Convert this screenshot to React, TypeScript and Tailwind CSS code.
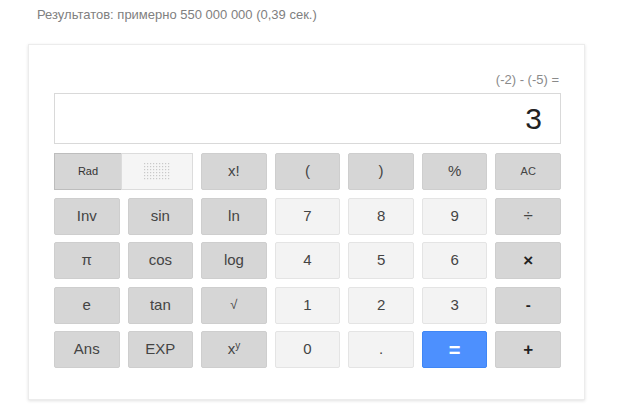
import React from "react";

type Kind = "fn" | "num" | "op" | "eq";

const Btn = ({ kind, children, className = "" }: { kind: Kind; children: React.ReactNode; className?: string }) => {
  const base = "h-[37px] flex items-center justify-center rounded-[2px] border text-[15px] select-none";
  const styles: Record<Kind, string> = {
    fn: "bg-[#d6d6d6] border-[#cecece] text-[#444]",
    num: "bg-[#f3f3f3] border-[#e4e4e4] text-[#444]",
    op: "bg-[#d6d6d6] border-[#cecece] text-[#222] font-bold",
    eq: "bg-[#4d90fe] border-[#3f86f5] text-white font-bold text-[20px]",
  };
  return <div className={`${base} ${styles[kind]} ${className}`}>{children}</div>;
};

const Dots = () => {
  const dots = [];
  for (let r = 0; r < 6; r++) {
    for (let c = 0; c < 9; c++) {
      dots.push(<rect key={`${r}-${c}`} x={c * 3} y={r * 3} width={1.2} height={1.2} fill="#c9c9c9" />);
    }
  }
  return (
    <svg width="27" height="18" viewBox="0 0 27 18">
      {dots}
    </svg>
  );
};

export default function App() {
  return (
    <div className="w-[628px] h-[405px] bg-white overflow-hidden" style={{ fontFamily: '"Liberation Sans", Arial, sans-serif' }}>
      <div className="pl-[37px] pt-[7px] text-[13px] leading-[16px] text-[#808080]">
        Результатов: примерно 550 000 000 (0,39 сек.)
      </div>
      <div className="ml-[28px] mt-[21px] w-[557px] h-[356px] border border-[#ececec] shadow-[0_1px_3px_rgba(0,0,0,0.12)] pl-[25px] pr-[23px] pt-[25px]">
        <div className="h-[23px] flex items-start justify-end pt-[2px] pr-[2px] text-[13px] leading-[15px] text-[#8a8a8a]">(-2) - (-5) =</div>
        <div className="h-[51px] border border-[#d9d9d9] flex items-center justify-end pr-[18px] text-[30px] text-[#222]">
          3
        </div>
        <div className="mt-[9px] grid grid-cols-7 gap-x-[8px] gap-y-[7.5px]">
          <div className="col-span-2 flex h-[37px]">
            <div className="w-[67px] h-full flex items-center justify-center bg-[#d6d6d6] border border-[#bdbdbd] border-r-0 text-[11px] text-[#333]">
              Rad
            </div>
            <div className="flex-1 h-full flex items-center justify-center bg-[#f5f5f5] border border-[#dcdcdc]">
              <Dots />
            </div>
          </div>
          <Btn kind="fn">x!</Btn>
          <Btn kind="fn">(</Btn>
          <Btn kind="fn">)</Btn>
          <Btn kind="fn">%</Btn>
          <Btn kind="fn" className="!text-[11px]">AC</Btn>

          <Btn kind="fn">Inv</Btn>
          <Btn kind="fn">sin</Btn>
          <Btn kind="fn">ln</Btn>
          <Btn kind="num">7</Btn>
          <Btn kind="num">8</Btn>
          <Btn kind="num">9</Btn>
          <Btn kind="op" className="!font-normal !text-[#444] !text-[17px]">÷</Btn>

          <Btn kind="fn">π</Btn>
          <Btn kind="fn">cos</Btn>
          <Btn kind="fn">log</Btn>
          <Btn kind="num">4</Btn>
          <Btn kind="num">5</Btn>
          <Btn kind="num">6</Btn>
          <Btn kind="op" className="!text-[17px]">×</Btn>

          <Btn kind="fn">e</Btn>
          <Btn kind="fn">tan</Btn>
          <Btn kind="fn" className="!text-[13px]">√</Btn>
          <Btn kind="num">1</Btn>
          <Btn kind="num">2</Btn>
          <Btn kind="num">3</Btn>
          <Btn kind="op">-</Btn>

          <Btn kind="fn">Ans</Btn>
          <Btn kind="fn">EXP</Btn>
          <Btn kind="fn">
            <span>
              x<sup className="text-[10px]">y</sup>
            </span>
          </Btn>
          <Btn kind="num">0</Btn>
          <Btn kind="num">.</Btn>
          <Btn kind="eq">=</Btn>
          <Btn kind="op" className="!text-[17px]">+</Btn>
        </div>
      </div>
    </div>
  );
}
